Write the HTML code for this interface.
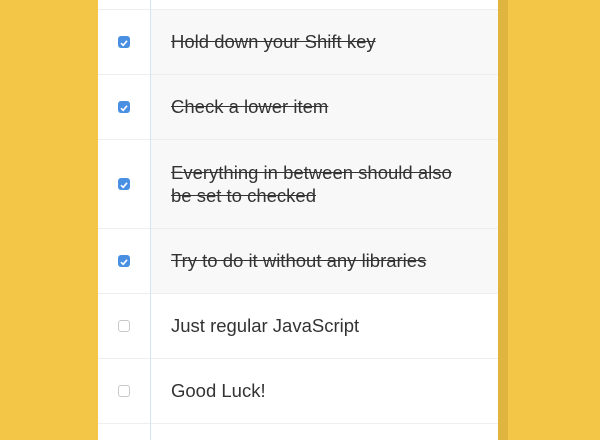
<!DOCTYPE html>
<html><head><style>
body{margin:0;width:600px;height:440px;background:#F4C647;overflow:hidden;font-family:"Liberation Sans",sans-serif;}
.card{position:absolute;left:98px;top:0;width:400px;height:440px;background:#fff;}
.strip{position:absolute;left:498px;top:0;width:10px;height:440px;background:#DFB43F;}
.vl{position:absolute;left:150px;top:0;width:1px;height:440px;background:#D6E4F8;}
.row{position:absolute;left:0;width:400px;border-bottom:1px solid #EEEEEE;box-sizing:border-box;}
.row .bg{position:absolute;left:53px;right:0;top:0;bottom:0;background:#F8F8F8;}
.cb{position:absolute;left:20px;width:12px;height:12px;border-radius:3px;box-sizing:border-box;}
.on{background:#4A90E2;}
.off{border:1px solid #C8C8C8;background:#fff;}
.t{position:absolute;left:73px;font-size:18.5px;color:#333;line-height:23px;font-weight:300;}
.done{text-decoration:line-through;}
</style></head><body>
<div class="card">
<div class="row" style="top:-56px;height:66px"></div>
<div class="row" style="top:10px;height:65px"><div class="bg"></div><div class="cb on" style="top:26px"><svg width="12" height="12"><path d="M3 6.2L5.2 8.3 9 3.8" stroke="#fff" stroke-width="1.6" fill="none"/></svg></div><div class="t done" style="top:20px">Hold down your Shift key</div></div>
<div class="row" style="top:75px;height:65px"><div class="bg"></div><div class="cb on" style="top:26px"><svg width="12" height="12"><path d="M3 6.2L5.2 8.3 9 3.8" stroke="#fff" stroke-width="1.6" fill="none"/></svg></div><div class="t done" style="top:20px">Check a lower item</div></div>
<div class="row" style="top:140px;height:89px"><div class="bg"></div><div class="cb on" style="top:38px"><svg width="12" height="12"><path d="M3 6.2L5.2 8.3 9 3.8" stroke="#fff" stroke-width="1.6" fill="none"/></svg></div><div class="t done" style="top:21px">Everything in between should also<br>be set to checked</div></div>
<div class="row" style="top:229px;height:65px"><div class="bg"></div><div class="cb on" style="top:26px"><svg width="12" height="12"><path d="M3 6.2L5.2 8.3 9 3.8" stroke="#fff" stroke-width="1.6" fill="none"/></svg></div><div class="t done" style="top:20px">Try to do it without any libraries</div></div>
<div class="row" style="top:294px;height:65px"><div class="cb off" style="top:26px"></div><div class="t" style="top:20px">Just regular JavaScript</div></div>
<div class="row" style="top:359px;height:65px"><div class="cb off" style="top:26px"></div><div class="t" style="top:20px">Good Luck!</div></div>
<div class="vl" style="left:52px"></div>
</div>
<div class="strip"></div>
</body></html>
